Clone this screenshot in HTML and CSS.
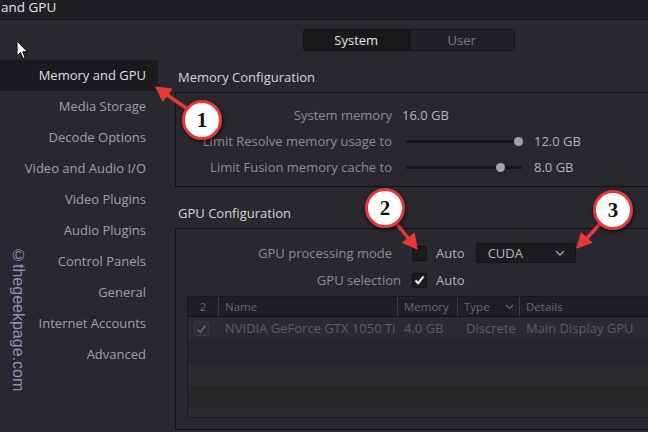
FILE: index.html
```html
<!DOCTYPE html>
<html lang="en">
<head>
    <meta charset="UTF-8">
    <title>Preferences - Memory and GPU</title>
    <link rel="stylesheet" href="styles.css">
</head>
<body>

<div class="topbar"><span>and GPU</span></div>

<div class="app">
    <nav class="sidebar">
        <div class="nav-item active">Memory and GPU</div>
        <div class="nav-item">Media Storage</div>
        <div class="nav-item">Decode Options</div>
        <div class="nav-item">Video and Audio I/O</div>
        <div class="nav-item">Video Plugins</div>
        <div class="nav-item">Audio Plugins</div>
        <div class="nav-item">Control Panels</div>
        <div class="nav-item">General</div>
        <div class="nav-item">Internet Accounts</div>
        <div class="nav-item">Advanced</div>
    </nav>

    <main class="panel">
        <div class="tabs">
            <div class="tab active">System</div>
            <div class="tab">User</div>
        </div>

        <h2 class="section-title">Memory Configuration</h2>
        <div class="box mem-box">
            <div class="mem-row">
                <span class="label">System memory</span>
                <span class="value">16.0 GB</span>
            </div>
            <div class="mem-row">
                <span class="label">Limit Resolve memory usage to</span>
                <div class="slider"><span class="thumb" style="left: 112px"></span></div>
                <span class="value">12.0 GB</span>
            </div>
            <div class="mem-row">
                <span class="label">Limit Fusion memory cache to</span>
                <div class="slider"><span class="thumb" style="left: 94px"></span></div>
                <span class="value">8.0 GB</span>
            </div>
        </div>

        <h2 class="section-title">GPU Configuration</h2>
        <div class="box gpu-box">
            <div class="gpu-row">
                <span class="label">GPU processing mode</span>
                <span class="checkbox"></span>
                <span class="check-text">Auto</span>
                <div class="dropdown">
                    <span>CUDA</span>
                    <svg width="10" height="6" viewBox="0 0 10 6"><path d="M1 1 L5 5 L9 1" fill="none" stroke="#a8a8ac" stroke-width="1.3"/></svg>
                </div>
            </div>
            <div class="gpu-row">
                <span class="label label-wide">GPU selection</span>
                <span class="checkbox checked">
                    <svg width="11" height="10" viewBox="0 0 11 10"><path d="M1.5 5.5 L4.2 8.2 L9.5 1.5" fill="none" stroke="#fff" stroke-width="2"/></svg>
                </span>
                <span class="check-text">Auto</span>
            </div>

            <div class="gpu-table">
                <div class="t-head">
                    <div class="c-num">2</div>
                    <div class="c-name">Name</div>
                    <div class="c-mem">Memory</div>
                    <div class="c-type">Type
                        <svg width="9" height="6" viewBox="0 0 9 6"><path d="M1 1 L4.5 4.5 L8 1" fill="none" stroke="#6a6a70" stroke-width="1.2"/></svg>
                    </div>
                    <div class="c-det">Details</div>
                </div>
                <div class="t-body">
                    <div class="t-row">
                        <div class="c-num">
                            <span class="row-check">
                                <svg width="11" height="10" viewBox="0 0 11 10"><path d="M1.5 5.5 L4.2 8.2 L9.5 1.5" fill="none" stroke="#6c6c72" stroke-width="1.5"/></svg>
                            </span>
                        </div>
                        <div class="c-name">NVIDIA GeForce GTX 1050 Ti</div>
                        <div class="c-mem">4.0 GB</div>
                        <div class="c-type">Discrete</div>
                        <div class="c-det">Main Display GPU</div>
                    </div>
                    <div class="t-row"></div>
                    <div class="t-row"></div>
                    <div class="t-row"></div>
                    <div class="t-row"></div>
                </div>
            </div>
        </div>
    </main>
</div>

<div class="watermark">©thegeekpage.com</div>

<svg class="cursor" width="13" height="20" viewBox="0 0 13 20">
    <path d="M1 1 L1 16 L4.5 12.5 L7 18.5 L9.2 17.6 L6.8 11.8 L11.5 11.8 Z" fill="#fff" stroke="#000" stroke-width="1"/>
</svg>

<svg class="arrows" width="648" height="432" viewBox="0 0 648 432">
    <g fill="#e8383a" stroke="#e8383a" stroke-width="3.5" stroke-linecap="round">
        <line x1="186" y1="108" x2="166" y2="94"/>
        <polygon points="156,87 172,89 163,101" stroke-width="1"/>
        <line x1="396" y1="223" x2="408" y2="238"/>
        <polygon points="417,249 402.5,242.5 414,233.5" stroke-width="1"/>
        <line x1="600" y1="224" x2="587" y2="238"/>
        <polygon points="577,248 592,242.5 581.5,233" stroke-width="1"/>
    </g>
</svg>

<div class="badge badge-1">1</div>
<div class="badge badge-2">2</div>
<div class="badge badge-3">3</div>

</body>
</html>
```

FILE: styles.css
```css
body {
    margin: 0;
    padding: 0;
    width: 648px;
    height: 432px;
    overflow: hidden;
    position: relative;
    background-color: #28282e;
    font-family: "Open Sans", "Noto Sans", sans-serif;
    font-size: 13px;
    color: #a0a0a4;
}

.topbar {
    height: 19px;
    background-color: #1f1f24;
    border-bottom: 1px solid #121215;
    color: #e6e6e8;
    font-size: 13.5px;
    line-height: 15px;
}
.topbar span {
    display: block;
    padding-left: 1px;
}

.app {
    display: flex;
}

/* left menu */
.sidebar {
    width: 158px;
    flex-shrink: 0;
    padding-top: 40px;
}
.nav-item {
    height: 31px;
    line-height: 31px;
    text-align: right;
    padding-right: 12px;
    white-space: nowrap;
}
.nav-item.active {
    background-color: #1b1b1f;
    color: #dedee0;
}

/* right panel */
.panel {
    flex-grow: 1;
    padding-left: 17px;
}
.tabs {
    display: flex;
    width: 210px;
    height: 20px;
    margin: 9px 0 0 128px;
    border: 1px solid #111113;
    border-radius: 3px;
    overflow: hidden;
}
.tab {
    flex: 1;
    text-align: center;
    line-height: 20px;
    background-color: #222226;
    color: #7c7c82;
}
.tab.active {
    background-color: #19191c;
    color: #e4e4e6;
    border-right: 1px solid #111113;
}

.section-title {
    margin: 17px 0 6px 3px;
    font-size: 13px;
    font-weight: normal;
    line-height: 18px;
    color: #d6d6d8;
}

.box {
    border: 1px solid #111113;
    margin-right: -20px;
}
.mem-box {
    padding: 9px 0 6px 0;
}
.mem-row {
    display: flex;
    align-items: center;
    height: 26px;
}
.label {
    width: 216px;
    text-align: right;
    white-space: nowrap;
    color: #8c8c92;
}
.value {
    color: #b4b4b8;
    margin-left: 10px;
}
.slider {
    position: relative;
    width: 116px;
    height: 3px;
    margin-left: 14px;
    background-color: #161618;
    border-radius: 2px;
}
.slider + .value {
    margin-left: 12px;
}
.thumb {
    position: absolute;
    top: -3px;
    width: 9px;
    height: 9px;
    margin-left: -4px;
    border-radius: 50%;
    background-color: #a4a4a8;
}

.gpu-box {
    padding: 11px 0 0 0;
    height: 189px;
    overflow: hidden;
}
.gpu-row {
    display: flex;
    align-items: center;
    height: 26px;
    margin-bottom: 1px;
}
.gpu-row .label {
    margin-right: 20px;
}
.gpu-row .label-wide {
    width: 225px;
    margin-right: 11px;
}
.checkbox {
    display: flex;
    align-items: center;
    justify-content: center;
    width: 13px;
    height: 13px;
    background-color: #1c1c1f;
    border: 1px solid #111113;
    border-radius: 2px;
}
.check-text {
    margin-left: 9px;
    color: #b0b0b4;
}
.dropdown {
    display: flex;
    align-items: center;
    justify-content: space-between;
    width: 77px;
    height: 18px;
    margin-left: 11px;
    padding: 0 10px 0 11px;
    background-color: #1c1c1f;
    border: 1px solid #141416;
    border-radius: 2px;
    color: #b8b8bc;
}

/* gpu list */
.gpu-table {
    margin: 3px 0 0 11px;
    border: 1px solid #19191c;
}
.t-head, .t-row {
    display: flex;
    white-space: nowrap;
}
.t-head {
    height: 19px;
    line-height: 19px;
    background-color: #1f1f23;
    border-bottom: 1px solid #121214;
    font-size: 11.5px;
    color: #68686e;
}
.t-head > div {
    border-right: 1px solid #3c3c42;
    box-sizing: border-box;
    padding-left: 6px;
}
.t-head .c-num {
    text-align: center;
    padding-left: 0;
}
.t-head .c-det {
    border-right: none;
}
.c-num { width: 31px; }
.c-name { width: 179px; }
.c-mem { width: 60px; }
.c-type {
    width: 62px;
    display: flex;
    align-items: center;
    justify-content: space-between;
    padding-right: 5px;
}
.c-det { flex-grow: 1; }

.t-body {
    height: 100px;
    overflow: hidden;
}
.t-row {
    height: 23px;
    line-height: 23px;
    background-color: #2a2a2f;
    color: #5e5e64;
}
.t-row:nth-child(even) {
    background-color: #262629;
}
.t-row > div {
    box-sizing: border-box;
    padding-left: 6px;
}
.t-row .c-num {
    display: flex;
    align-items: center;
    padding-left: 6px;
}
.t-row .c-type {
    padding-left: 8px;
}
.row-check {
    display: flex;
    align-items: center;
    justify-content: center;
    width: 13px;
    height: 13px;
    background-color: #2e2e33;
    border: 1px solid #3a3a40;
    border-radius: 2px;
}

/* overlays */
.watermark {
    position: absolute;
    left: 9px;
    top: 247px;
    writing-mode: vertical-rl;
    font-family: "Liberation Sans", Arial, sans-serif;
    font-size: 16px;
    color: #9292ac;
}
.cursor {
    position: absolute;
    left: 16px;
    top: 40px;
}
.arrows {
    position: absolute;
    left: 0;
    top: 0;
    pointer-events: none;
}
.badge {
    position: absolute;
    width: 34px;
    height: 34px;
    border: 3px solid #e8383a;
    border-radius: 50%;
    background-color: #fff;
    box-shadow: 1px 2px 4px rgba(0, 0, 0, 0.6);
    text-align: center;
    line-height: 34px;
    font-family: "Liberation Serif", "Times New Roman", serif;
    font-weight: bold;
    font-size: 21px;
    color: #111;
}
.badge-1 { left: 182px; top: 100px; }
.badge-2 { left: 365px; top: 188px; }
.badge-3 { left: 593px; top: 190px; }
```
